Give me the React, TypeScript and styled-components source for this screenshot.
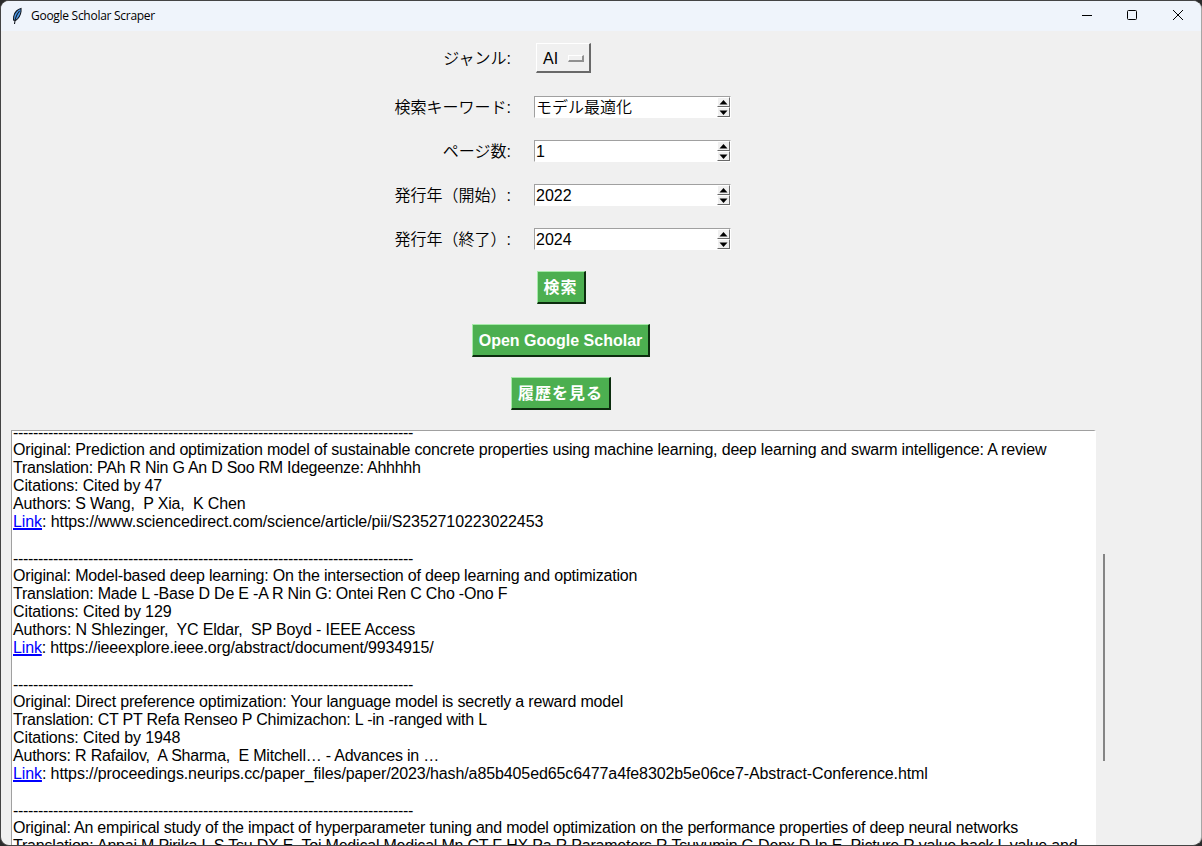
import React from "react";
import styled, { createGlobalStyle } from "styled-components";

const GlobalStyle = createGlobalStyle`
  * { box-sizing: border-box; }
  body { margin: 0; background: #2b2b2b; overflow: hidden; }
`;

const Window = styled.div`
  width: 1202px;
  height: 846px;
  display: flex;
  flex-direction: column;
  overflow: hidden;
  border: 1px solid #444;
  border-right-color: #a6a6a6;
  border-radius: 9px;
  background: #f0f0f0;
  color: #000;
  font: 16px/18px "Liberation Sans", "Noto Sans CJK JP", sans-serif;
`;

const TitleBar = styled.header`
  flex: none;
  height: 30px;
  display: flex;
  align-items: center;
  padding-left: 10px;
  background: #eff4fb;
`;

const Title = styled.h1`
  flex: 1;
  margin: 0 0 0 8px;
  font: 400 12px/16px "Open Sans", sans-serif;
  letter-spacing: -0.28px;
`;

const Caption = styled.button`
  width: 46px;
  height: 30px;
  padding: 0 0 2px;
  display: grid;
  place-items: center;
  border: 0;
  background: none;
`;

const Form = styled.form`
  flex: none;
  width: 1122px;
  display: flex;
  flex-direction: column;
  gap: 22px;
  padding-top: 12px;
`;

const Field = styled.div<{ $tall?: boolean }>`
  height: ${(p) => (p.$tall ? 30 : 22)}px;
  margin-bottom: ${(p) => (p.$tall ? 1 : 0)}px;
  display: grid;
  grid-template-columns: 510px 1fr;
  column-gap: ${(p) => (p.$tall ? 25 : 23)}px;
  align-items: center;
`;

const Label = styled.label`
  padding-top: 2px;
  text-align: right;
  font-weight: 350;
`;

const OptionMenu = styled.button`
  width: 55px;
  height: 30px;
  display: flex;
  align-items: center;
  justify-content: space-between;
  padding: 2px 5px 0 6px;
  border: solid;
  border-width: 1px 2px 2px 1px;
  border-color: #fff #696969 #696969 #fff;
  background: #f0f0f0;
  font: inherit;
`;

const Indicator = styled.span`
  width: 16px;
  height: 7px;
  border: solid;
  border-width: 1px 2px 2px 1px;
  border-color: #fff #909090 #909090 #fff;
`;

const SpinBox = styled.div`
  width: 197px;
  height: 22px;
  display: flex;
  justify-content: space-between;
  border: 1px solid #fff;
  border-top-color: #a0a0a0;
  border-left-color: #a0a0a0;
  background: #fff;
  line-height: 21px;
  padding-left: 1px;
  font-weight: 350;
`;

const Arrows = styled.span`
  width: 13px;
  display: flex;
  flex-direction: column;
`;

const Arrow = styled.span`
  height: 10px;
  display: flex;
  justify-content: center;
  align-items: center;
  border: 1px solid;
  border-color: #fff #696969 #696969 #fff;
  background: #f0f0f0;
`;

const Actions = styled.div`
  flex: none;
  width: 1120px;
  display: flex;
  flex-direction: column;
  align-items: center;
  gap: 20px;
  padding: 21px 0 20px;
`;

const Action = styled.button<{ $width: number; $wide?: boolean }>`
  width: ${(p) => p.$width}px;
  height: 33px;
  padding: 2px 0 0;
  border: solid;
  border-width: 1px 2px 2px 1px;
  border-color: #a6eaa8 #0c2c0e #0c2c0e #a6eaa8;
  background: #4caf50;
  color: #fff;
  font: bold 16px/28px "Liberation Sans", "Noto Sans CJK JP", sans-serif;
  letter-spacing: ${(p) => (p.$wide ? 1 : 0)}px;
`;

const Results = styled.div`
  flex: 1;
  min-height: 0;
  display: flex;
  padding-left: 10px;
`;

const Output = styled.div`
  width: 1085px;
  overflow: hidden;
  border: solid;
  border-width: 1px 2px 0 1px;
  border-color: #a0a0a0 #fff #fff #a0a0a0;
  background: #fff;
  padding-left: 1px;
`;

const Lines = styled.div`
  margin-top: -8px;
`;

const Line = styled.p<{ $tracking: number }>`
  height: 18px;
  margin: 0;
  white-space: pre;
  letter-spacing: ${(p) => p.$tracking}px;
`;

const Divider = styled(Line)`
  padding-top: 1px;
`;

const Link = styled.a`
  color: #00f;
  text-decoration: underline;
  text-decoration-thickness: 2px;
  text-underline-offset: 1px;
`;

const ScrollThumb = styled.div`
  width: 2px;
  height: 207px;
  margin: 124px 0 0 7px;
  background: #858585;
`;

const Feather = () => (
  <svg width="12" height="18" viewBox="0 0 12 18">
    <path d="M10 1.500C7 2 3.500 5 2.700 9.500L2.500 13l2 .5c3-2 5-5 5.500-9z" fill="#4a97e6" stroke="#14181f" strokeWidth="1.100" />
    <path d="M8.500 4C6 7 4 11 3.500 17" fill="none" stroke="#14181f" strokeWidth="1.100" />
  </svg>
);

type Row = { text: string; squeeze?: number; link?: boolean; divider?: boolean };

const divider: Row = { text: "-".repeat(80), squeeze: 26.2, divider: true };
const blank: Row = { text: "" };

// `squeeze` is how many pixels the whole line is tightened by.
const rows: Row[] = [
  divider,
  { text: "Original: Prediction and optimization model of sustainable concrete properties using machine learning, deep learning and swarm intelligence: A review", squeeze: 26 },
  { text: "Translation: PAh R Nin G An D Soo RM Idegeenze: Ahhhhh", squeeze: 14 },
  { text: "Citations: Cited by 47", squeeze: 3 },
  { text: "Authors: S Wang,  P Xia,  K Chen", squeeze: 6 },
  { text: ": https://www.sciencedirect.com/science/article/pii/S2352710223022453", squeeze: 6, link: true },
  blank,
  divider,
  { text: "Original: Model-based deep learning: On the intersection of deep learning and optimization", squeeze: 17 },
  { text: "Translation: Made L -Base D De E -A R Nin G: Ontei Ren C Cho -Ono F", squeeze: 14 },
  { text: "Citations: Cited by 129", squeeze: 2.5 },
  { text: "Authors: N Shlezinger,  YC Eldar,  SP Boyd - IEEE Access", squeeze: 10 },
  { text: ": https://ieeexplore.ieee.org/abstract/document/9934915/", squeeze: 9, link: true },
  blank,
  divider,
  { text: "Original: Direct preference optimization: Your language model is secretly a reward model", squeeze: 16 },
  { text: "Translation: CT PT Refa Renseo P Chimizachon: L -in -ranged with L", squeeze: 14 },
  { text: "Citations: Cited by 1948", squeeze: 2.5 },
  { text: "Authors: R Rafailov,  A Sharma,  E Mitchell… - Advances in …", squeeze: 13 },
  { text: ": https://proceedings.neurips.cc/paper_files/paper/2023/hash/a85b405ed65c6477a4fe8302b5e06ce7-Abstract-Conference.html", squeeze: 13, link: true },
  blank,
  divider,
  { text: "Original: An empirical study of the impact of hyperparameter tuning and model optimization on the performance properties of deep neural networks", squeeze: 31 },
  { text: "Translation: Anpai M Pirika L S Tsu DX E, Toi Medical Medical Mn CT F HX Pa R Parameters R Tsuyumin G Depx D In E, Picture R value back L value and", squeeze: 30 },
];

const Spin = ({ value }: { value: string }) => (
  <SpinBox>
    <span>{value}</span>
    <Arrows>
      <Arrow>
        <svg width="9" height="5" viewBox="0 0 9 5"><path d="M0.500 4.500L4.500 0L8.500 4.500z" /></svg>
      </Arrow>
      <Arrow>
        <svg width="9" height="5" viewBox="0 0 9 5"><path d="M0.500 0.500L4.500 5L8.500 0.500z" /></svg>
      </Arrow>
    </Arrows>
  </SpinBox>
);

const fields = [
  ["検索キーワード:", "モデル最適化"],
  ["ページ数:", "1"],
  ["発行年（開始）:", "2022"],
  ["発行年（終了）:", "2024"],
];

export default function App() {
  return (
    <>
      <GlobalStyle />
      <Window>
        <TitleBar>
          <Feather />
          <Title>Google Scholar Scraper</Title>
          <Caption aria-label="Minimize">
            <svg width="12" height="10"><path d="M2 5.500H12" stroke="#000" /></svg>
          </Caption>
          <Caption aria-label="Maximize">
            <svg width="10" height="10"><rect x=".5" y=".5" width="9" height="9" rx="1" fill="none" stroke="#000" /></svg>
          </Caption>
          <Caption aria-label="Close">
            <svg width="10" height="10"><path d="M0 0L10 10M10 0L0 10" stroke="#000" /></svg>
          </Caption>
        </TitleBar>
        <Form>
          <Field $tall>
            <Label>ジャンル:</Label>
            <OptionMenu type="button">AI<Indicator /></OptionMenu>
          </Field>
          {fields.map(([label, value]) => (
            <Field key={label}>
              <Label>{label}</Label>
              <Spin value={value} />
            </Field>
          ))}
        </Form>
        <Actions>
          <Action $width={49} $wide>検索</Action>
          <Action $width={178}>Open Google Scholar</Action>
          <Action $width={100} $wide>履歴を見る</Action>
        </Actions>
        <Results>
          <Output>
            <Lines>
              {rows.map((row, i) => {
                const length = row.text.length + (row.link ? 4 : 0);
                const tracking = length ? -(row.squeeze ?? 0) / length : 0;
                const Part = row.divider ? Divider : Line;
                return (
                  <Part key={i} $tracking={tracking}>
                    {row.link && <Link>Link</Link>}
                    {row.text}
                  </Part>
                );
              })}
            </Lines>
          </Output>
          <ScrollThumb />
        </Results>
      </Window>
    </>
  );
}
